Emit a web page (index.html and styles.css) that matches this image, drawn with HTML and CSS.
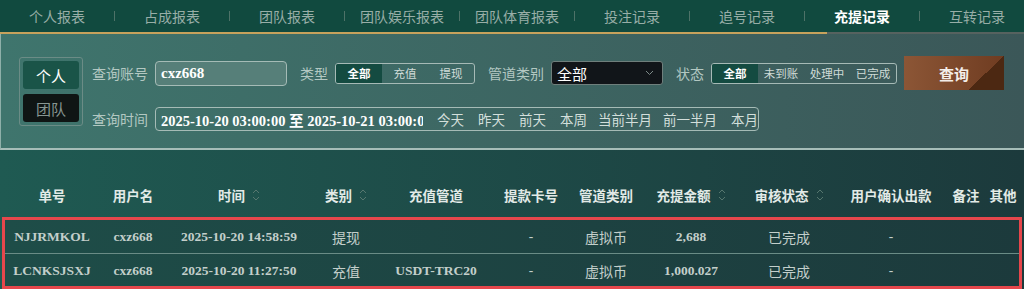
FILE: index.html
```html
<!DOCTYPE html>
<html lang="zh-CN">
<head>
    <meta charset="UTF-8">
    <title>充提记录</title>
    <link rel="stylesheet" href="styles.css">
</head>
<body>
    <nav class="tabs">
        <a class="tab">个人报表</a><span class="sep"></span>
        <a class="tab">占成报表</a><span class="sep"></span>
        <a class="tab">团队报表</a><span class="sep"></span>
        <a class="tab">团队娱乐报表</a><span class="sep"></span>
        <a class="tab">团队体育报表</a><span class="sep"></span>
        <a class="tab">投注记录</a><span class="sep"></span>
        <a class="tab">追号记录</a><span class="sep"></span>
        <a class="tab active">充提记录</a><span class="sep"></span>
        <a class="tab">互转记录</a>
    </nav>
    <div class="tab-line"></div>

    <section class="filters">
        <div class="scope">
            <button class="scope-btn on">个人</button>
            <button class="scope-btn">团队</button>
        </div>
        <div class="filter-rows">
            <div class="filter-row">
                <label class="label">查询账号</label>
                <div class="text-input">cxz668</div>
                <label class="label spaced">类型</label>
                <div class="segmented">
                    <span class="seg on">全部</span>
                    <span class="seg">充值</span>
                    <span class="seg">提现</span>
                </div>
                <label class="label spaced">管道类别</label>
                <div class="select">
                    <span>全部</span>
                    <svg width="9" height="6" viewBox="0 0 9 6"><path d="M1 1 L4.5 4.5 L8 1" fill="none" stroke="#7d8a88" stroke-width="1"/></svg>
                </div>
                <label class="label spaced">状态</label>
                <div class="segmented">
                    <span class="seg on">全部</span>
                    <span class="seg">未到账</span>
                    <span class="seg">处理中</span>
                    <span class="seg">已完成</span>
                </div>
                <button class="search-btn">查询</button>
            </div>
            <div class="filter-row">
                <label class="label">查询时间</label>
                <div class="date-range">
                    <span class="date-text">2025-10-20 03:00:00 至 2025-10-21 03:00:00</span>
                    <span class="quick">今天</span>
                    <span class="quick">昨天</span>
                    <span class="quick">前天</span>
                    <span class="quick">本周</span>
                    <span class="quick">当前半月</span>
                    <span class="quick">前一半月</span>
                    <span class="quick">本月</span>
                </div>
            </div>
        </div>
    </section>

    <section class="records">
        <div class="grid head">
            <span>单号</span>
            <span>用户名</span>
            <span>时间<svg class="sort" width="8" height="14" viewBox="0 0 8 14"><path d="M1 5 L4 2 L7 5 M1 9 L4 12 L7 9" fill="none" stroke="#56776f" stroke-width="1"/></svg></span>
            <span>类别<svg class="sort" width="8" height="14" viewBox="0 0 8 14"><path d="M1 5 L4 2 L7 5 M1 9 L4 12 L7 9" fill="none" stroke="#56776f" stroke-width="1"/></svg></span>
            <span>充值管道</span>
            <span>提款卡号</span>
            <span>管道类别</span>
            <span>充提金额<svg class="sort" width="8" height="14" viewBox="0 0 8 14"><path d="M1 5 L4 2 L7 5 M1 9 L4 12 L7 9" fill="none" stroke="#56776f" stroke-width="1"/></svg></span>
            <span>审核状态<svg class="sort" width="8" height="14" viewBox="0 0 8 14"><path d="M1 5 L4 2 L7 5 M1 9 L4 12 L7 9" fill="none" stroke="#56776f" stroke-width="1"/></svg></span>
            <span>用户确认出款</span>
            <span>备注</span>
            <span>其他</span>
        </div>
        <div class="rows">
            <div class="grid row">
                <span>NJJRMKOL</span>
                <span>cxz668</span>
                <span>2025-10-20 14:58:59</span>
                <span class="cn">提现</span>
                <span></span>
                <span>-</span>
                <span class="cn">虚拟币</span>
                <span>2,688</span>
                <span class="cn">已完成</span>
                <span>-</span>
                <span></span>
                <span></span>
            </div>
            <div class="grid row">
                <span>LCNKSJSXJ</span>
                <span>cxz668</span>
                <span>2025-10-20 11:27:50</span>
                <span class="cn">充值</span>
                <span>USDT-TRC20</span>
                <span>-</span>
                <span class="cn">虚拟币</span>
                <span>1,000.027</span>
                <span class="cn">已完成</span>
                <span>-</span>
                <span></span>
                <span></span>
            </div>
        </div>
    </section>
</body>
</html>
```

FILE: styles.css
```css
body {
    margin: 0;
    width: 1024px;
    height: 289px;
    overflow: hidden;
    background: #1c3a3c;
    font-family: "Noto Sans CJK SC", "Noto Sans", sans-serif;
}

.tabs {
    display: flex;
    align-items: center;
    height: 32px;
    background: #114a3f;
    overflow: hidden;
    white-space: nowrap;
}

.tab {
    flex: 0 0 114px;
    text-align: center;
    font-size: 14px;
    color: #98aea7;
}

.tab.active {
    color: #ffffff;
    font-weight: bold;
}

.sep {
    flex: 0 0 1px;
    height: 10px;
    background: #4e7268;
}

.tab-line {
    height: 2px;
    background: linear-gradient(90deg, #c7a25c 0 827px, #56625f 827px);
}

.filters {
    display: flex;
    align-items: flex-start;
    height: 116px;
    padding-top: 22px;
    box-sizing: border-box;
    border-left: 1px solid #8fb0a9;
    border-bottom: 2px solid #a6bdb8;
    background: linear-gradient(90deg, #3f756d, #3b5758);
}

.scope {
    display: flex;
    flex-direction: column;
    gap: 5px;
    margin: 1px 0 0 18px;
    padding: 3px;
    border: 1px solid #6b8c86;
    border-radius: 3px;
}

.scope-btn {
    width: 56px;
    height: 28px;
    padding: 0;
    border: none;
    border-radius: 3px;
    background: #0f1514;
    color: #879692;
    font-family: inherit;
    font-size: 15px;
}

.scope-btn.on {
    background: #1a5448;
    color: #ffffff;
}

.filter-rows {
    display: flex;
    flex-direction: column;
    gap: 17px;
    margin-left: 9px;
}

.filter-row {
    display: flex;
    align-items: center;
    gap: 7px;
    height: 34px;
}

.filter-row + .filter-row {
    height: 24px;
}

.label {
    font-size: 14px;
    color: #b3c8c2;
    white-space: nowrap;
}

.label.spaced {
    margin-left: 6px;
}

.text-input {
    width: 120px;
    height: 23px;
    padding: 0 5px;
    border: 1px solid #a5bbb6;
    border-radius: 4px;
    background: #567f79;
    color: #ffffff;
    font: bold 15px "Liberation Serif", serif;
    line-height: 23px;
}

.segmented {
    display: flex;
    height: 19px;
    border: 1px solid #a6bab6;
    border-radius: 3px;
    overflow: hidden;
}

.seg {
    width: 46px;
    text-align: center;
    font-size: 11.5px;
    line-height: 19px;
    color: #cfdbd7;
}

.seg.on {
    background: #144b41;
    color: #ffffff;
    font-weight: bold;
}

.select {
    display: flex;
    align-items: center;
    justify-content: space-between;
    width: 97px;
    height: 22px;
    padding: 0 8px 0 5px;
    border: 1px solid #6f7f7c;
    border-radius: 3px;
    background: #111519;
    color: #ffffff;
    font-size: 15px;
}

.search-btn {
    width: 100px;
    height: 34px;
    border: none;
    background:
        linear-gradient(to top left, #4c2812 0 50%, transparent 50%) right / 36px 100% no-repeat,
        linear-gradient(90deg, #8c5636, #6f3c21);
    color: #f4eee9;
    font-family: inherit;
    font-size: 15px;
    font-weight: bold;
}

.date-range {
    display: flex;
    align-items: center;
    gap: 14px;
    width: 597px;
    height: 22px;
    padding-left: 5px;
    border: 1px solid #a5bbb6;
    border-radius: 4px;
}

.date-text {
    width: 264px;
    overflow: hidden;
    white-space: nowrap;
    color: #ffffff;
    font: bold 14.5px "Liberation Serif", "Noto Sans CJK SC", serif;
}

.quick {
    font-size: 13.5px;
    color: #d3dfdb;
    white-space: nowrap;
}

.quick:nth-child(6),
.quick:nth-child(7) {
    margin-left: -3px;
}

.records {
    height: 139px;
    padding-top: 22px;
    box-sizing: border-box;
    background: linear-gradient(90deg, #1f5a52, #1c3a3c);
}

.grid {
    display: grid;
    grid-template-columns: 94px 68px 144px 70px 110px 80px 70px 100px 96px 108px 42px 32px;
    align-items: center;
    text-align: center;
}

.head {
    height: 45px;
    padding: 0 5px;
    font-size: 13.5px;
    font-weight: bold;
    color: #e2eae7;
}

.head span {
    display: flex;
    align-items: center;
    justify-content: center;
    gap: 7px;
    white-space: nowrap;
}

.sort {
    display: block;
}

.rows {
    margin: 0 2px;
    border: 3px solid #e6474c;
}

.row {
    height: 33px;
    font: bold 13.5px "Liberation Serif", serif;
    color: #c3cfcb;
    white-space: nowrap;
    background: linear-gradient(90deg, #1e4d48, #1c3a3c);
}

.row + .row {
    height: 31px;
    padding-top: 1px;
    border-top: 1px solid #6a8c86;
}

.row .cn {
    font: 14px "Noto Sans CJK SC", sans-serif;
}
```
